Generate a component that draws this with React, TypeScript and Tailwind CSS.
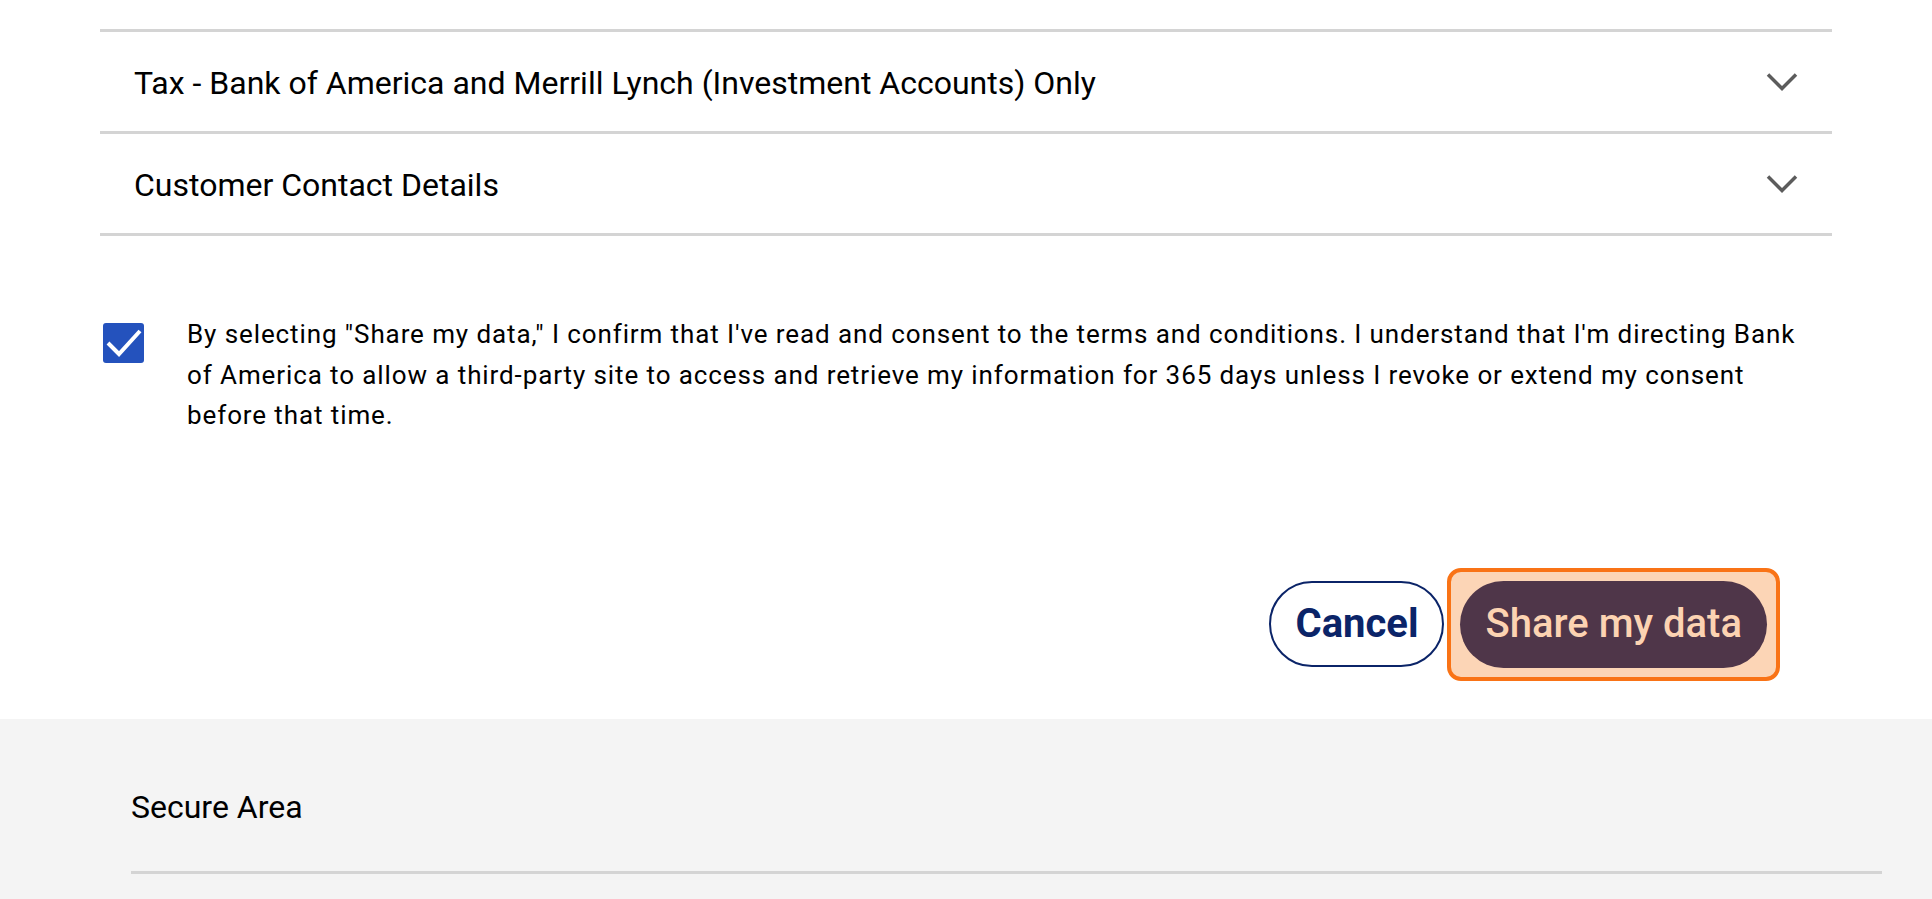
import React from 'react';

const Chevron = () => (
  <svg width="32" height="20" viewBox="0 0 32 20" fill="none" aria-hidden="true">
    <polyline points="2,2.5 16,16.5 30,2.5" stroke="#5c5c5c" strokeWidth="3.5" />
  </svg>
);

const rows = [
  'Tax - Bank of America and Merrill Lynch (Investment Accounts) Only',
  'Customer Contact Details',
];

export default function App() {
  return (
    <div className="min-h-[899px] bg-white text-black" style={{ fontFamily: 'Roboto, "Liberation Sans", sans-serif' }}>
      <div className="px-[100px] pr-[100px] pt-[29px]">
        {/* accordion rows */}
        <div className="border-b-[3px] border-[#d4d4d4]">
          {rows.map((title) => (
            <div
              key={title}
              className="flex h-[102px] items-center justify-between border-t-[3px] border-[#d4d4d4] pl-[34px] pr-[34px]"
            >
              <span className="pt-[2px] text-[32px] leading-none">{title}</span>
              <Chevron />
            </div>
          ))}
        </div>

        {/* consent */}
        <div className="mt-[78px] flex items-start gap-[43px] pl-[3px]">
          <div className="mt-[9px] flex h-[40px] w-[41px] shrink-0 items-start justify-start rounded-[3px] bg-[#2452bd]">
            <svg width="41" height="40" viewBox="0 0 41 40" fill="none" aria-hidden="true">
              <polyline points="5,20 16,31 37,8" stroke="#ffffff" strokeWidth="4" />
            </svg>
          </div>
          <p className="max-w-[1640px] pr-[30px] text-[26px] leading-[40.6px] tracking-[0.9px]">
            By selecting "Share my data," I confirm that I've read and consent to the terms and conditions. I
            understand that I'm directing Bank of America to allow a third-party site to access and retrieve my
            information for 365 days unless I revoke or extend my consent before that time.
          </p>
        </div>

        {/* actions */}
        <div className="mt-[132px] flex items-center justify-end gap-[3px] pr-[52px]">
          <button className="h-[86px] rounded-full border-2 border-[#0b2468] bg-white px-[24px] text-[40px] font-bold text-[#0b2468]">
            Cancel
          </button>
          <div className="rounded-[14px] border-4 border-[#f97316] bg-[#fcd5b6] px-[9px] py-[9px]">
            <button className="h-[87px] rounded-full bg-[#4f3649] px-[25px] text-[40px] font-medium text-[#fcd3b2]">
              Share my data
            </button>
          </div>
        </div>
      </div>

      {/* footer */}
      <div className="mt-[38px] bg-[#f4f4f4] pl-[131px] pr-[50px] pt-[72px] pb-[28px]">
        <div className="text-[32px] leading-none">Secure Area</div>
        <div className="mt-[48px] h-[3px] bg-[#d4d4d4]" />
      </div>
    </div>
  );
}
